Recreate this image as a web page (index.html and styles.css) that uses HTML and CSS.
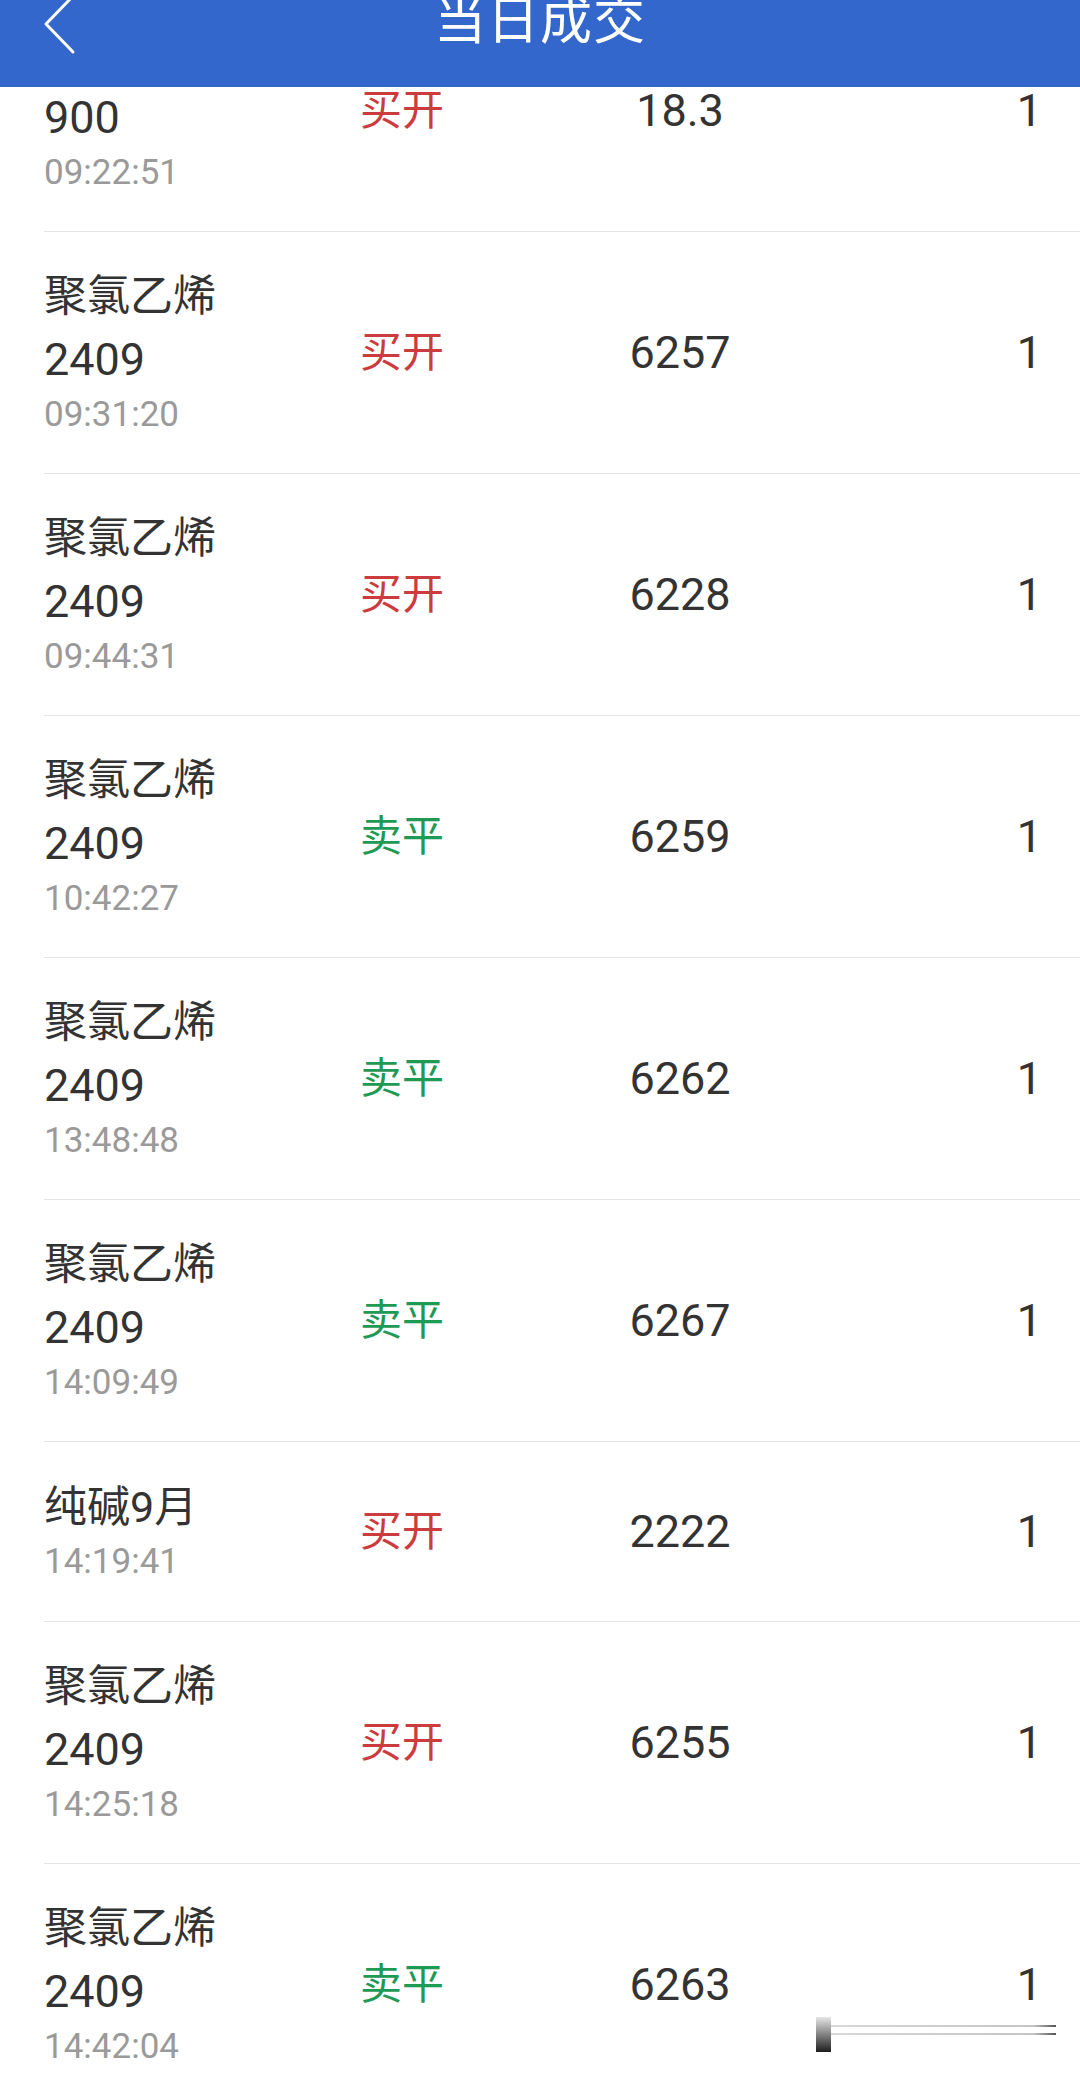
FILE: index.html
```html
<!DOCTYPE html>
<html lang="zh-CN">
<head>
<meta charset="utf-8">
<title>当日成交</title>
<link rel="stylesheet" href="styles.css">
</head>
<body>
<header class="topbar">
  <div class="back">
    <svg class="back-icon" width="32" height="56" viewBox="0 0 32 56" aria-hidden="true">
      <polyline points="29,-4 2,24 29,52" fill="none" stroke="#ffffff" stroke-width="3" stroke-linecap="round" stroke-linejoin="round"/>
    </svg>
  </div>
  <h1 class="title">当日成交</h1>
  <div class="spacer"></div>
</header>

<main class="list">
  <div class="row">
    <div class="info"><div class="name">&nbsp;</div><div class="code">900</div><div class="time">09:22:51</div></div>
    <div class="act buy">买开</div><div class="price">18.3</div><div class="qty">1</div>
  </div>
  <div class="row">
    <div class="info"><div class="name">聚氯乙烯</div><div class="code">2409</div><div class="time">09:31:20</div></div>
    <div class="act buy">买开</div><div class="price">6257</div><div class="qty">1</div>
  </div>
  <div class="row">
    <div class="info"><div class="name">聚氯乙烯</div><div class="code">2409</div><div class="time">09:44:31</div></div>
    <div class="act buy">买开</div><div class="price">6228</div><div class="qty">1</div>
  </div>
  <div class="row">
    <div class="info"><div class="name">聚氯乙烯</div><div class="code">2409</div><div class="time">10:42:27</div></div>
    <div class="act sell">卖平</div><div class="price">6259</div><div class="qty">1</div>
  </div>
  <div class="row">
    <div class="info"><div class="name">聚氯乙烯</div><div class="code">2409</div><div class="time">13:48:48</div></div>
    <div class="act sell">卖平</div><div class="price">6262</div><div class="qty">1</div>
  </div>
  <div class="row">
    <div class="info"><div class="name">聚氯乙烯</div><div class="code">2409</div><div class="time">14:09:49</div></div>
    <div class="act sell">卖平</div><div class="price">6267</div><div class="qty">1</div>
  </div>
  <div class="row row-short">
    <div class="info"><div class="name">纯碱9月</div><div class="time">14:19:41</div></div>
    <div class="act buy">买开</div><div class="price">2222</div><div class="qty">1</div>
  </div>
  <div class="row">
    <div class="info"><div class="name">聚氯乙烯</div><div class="code">2409</div><div class="time">14:25:18</div></div>
    <div class="act buy">买开</div><div class="price">6255</div><div class="qty">1</div>
  </div>
  <div class="row">
    <div class="info"><div class="name">聚氯乙烯</div><div class="code">2409</div><div class="time">14:42:04</div></div>
    <div class="act sell">卖平</div><div class="price">6263</div><div class="qty">1</div>
  </div>
</main>

<div class="ghost" aria-hidden="true">
  <div class="ghost-bar"></div>
  <div class="ghost-lines"><div class="ghost-line"></div><div class="ghost-line"></div></div>
</div>
</body>
</html>
```

FILE: styles.css
```css
html, body {
  margin: 0;
  padding: 0;
  background: #ffffff;
}

body {
  width: 1080px;
  font-family: "Roboto", "Noto Sans CJK SC", sans-serif;
  color: #333333;
  overflow: hidden;
}

.topbar {
  position: fixed;
  top: 0;
  left: 0;
  right: 0;
  height: 87px;
  background: #3467cc;
  display: grid;
  grid-template-columns: 1fr auto 1fr;
  align-items: start;
  z-index: 5;
}

.back {
  padding-left: 44px;
}

.back-icon {
  display: block;
  overflow: visible;
}

.title {
  margin: 2px 0 0 0;
  font-size: 52px;
  line-height: 40px;
  font-weight: 400;
  color: #ffffff;
  letter-spacing: 1px;
}

.list {
  margin-top: -10px;
}

.row {
  margin-left: 44px;
  padding: 32px 38px 35px 0;
  border-bottom: 1px solid #e4e4e4;
  display: grid;
  grid-template-columns: 316px 200px 240px 1fr;
  align-items: center;
}

.row-short {
  padding-top: 33px;
  padding-bottom: 36px;
}

.info {
  display: flex;
  flex-direction: column;
}

.name {
  font-size: 43px;
  line-height: 64px;
  height: 64px;
  white-space: nowrap;
}

.code {
  font-size: 45px;
  line-height: 64px;
  height: 64px;
}

.time {
  font-size: 35px;
  line-height: 46px;
  height: 46px;
  color: #9a9a9a;
}

.act,
.price,
.qty {
  line-height: 60px;
  padding-top: 4px;
}

.act {
  font-size: 42px;
}

.buy {
  color: #cc3b3d;
}

.sell {
  color: #1f9a55;
}

.price {
  font-size: 45px;
  text-align: center;
}

.qty {
  font-size: 45px;
  text-align: right;
}

.ghost {
  position: fixed;
  left: 816px;
  top: 2017px;
  width: 240px;
  height: 36px;
  display: flex;
  align-items: flex-start;
  z-index: 6;
}

.ghost-bar {
  width: 15px;
  height: 35px;
  background: linear-gradient(to bottom, #e6e6e6, #1e1e1e);
}

.ghost-lines {
  flex: 1;
  display: flex;
  flex-direction: column;
  gap: 6px;
  padding-top: 8px;
}

.ghost-line {
  height: 2px;
  background: linear-gradient(to right, #d8d8d8, #c4c4c4 90%, #555555);
}
```
